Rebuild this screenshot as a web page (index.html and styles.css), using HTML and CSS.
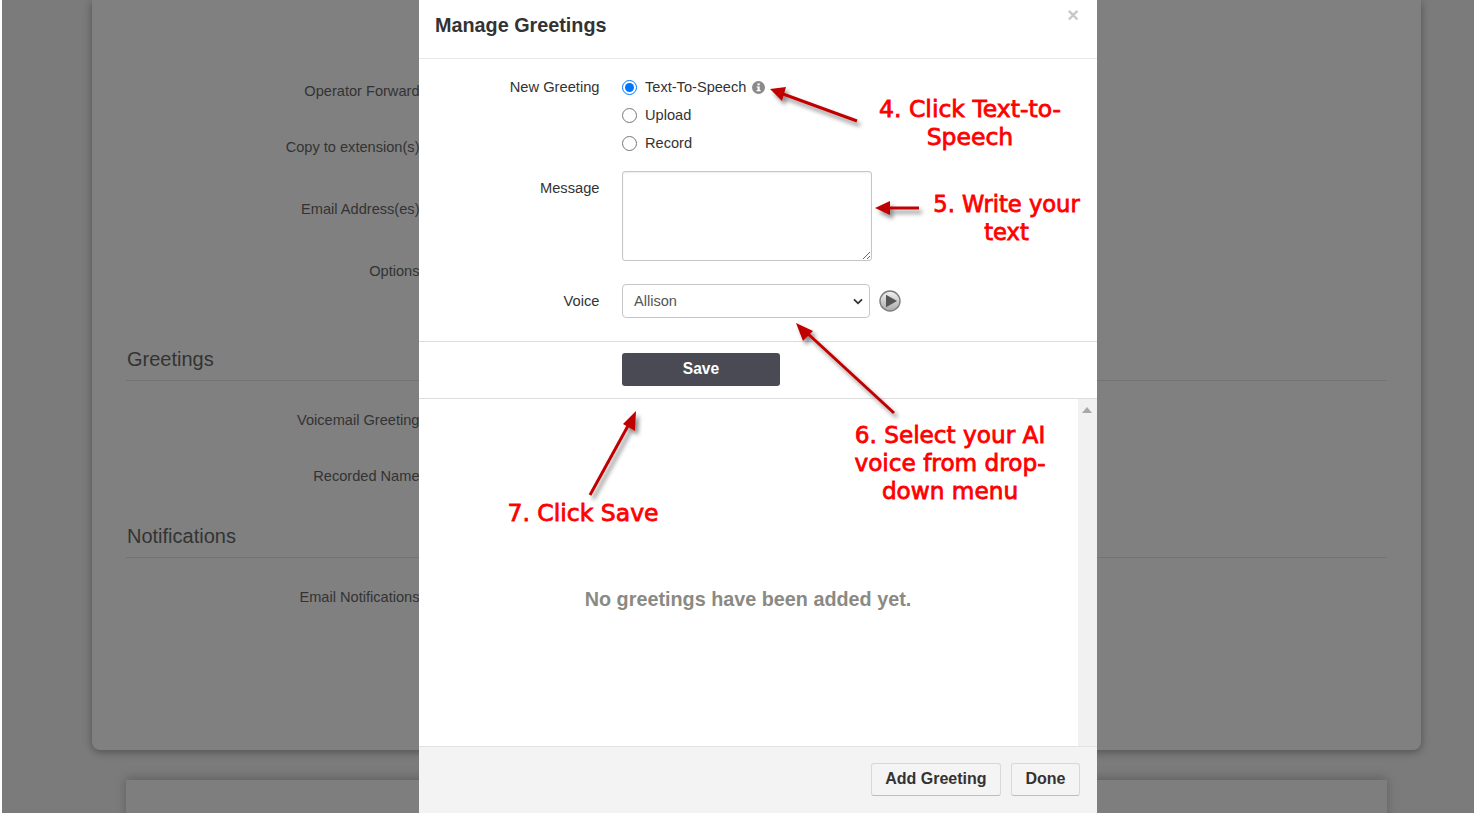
FILE: index.html
```html
<!DOCTYPE html>
<html lang="en">
<head>
<meta charset="utf-8">
<title>Manage Greetings</title>
<link rel="stylesheet" href="styles.css">
</head>
<body>
<div class="page">
  <section class="card main-card">
    <div class="row r-op"><span class="bg-label">Operator Forward</span></div>
    <div class="row r-copy"><span class="bg-label">Copy to extension(s)</span></div>
    <div class="row r-email"><span class="bg-label">Email Address(es)</span></div>
    <div class="row r-opt"><span class="bg-label">Options</span></div>
    <h2 class="bg-heading h-greet">Greetings</h2>
    <div class="row r-vm"><span class="bg-label">Voicemail Greeting</span></div>
    <div class="row r-name"><span class="bg-label">Recorded Name</span></div>
    <h2 class="bg-heading h-notif">Notifications</h2>
    <div class="row r-notif"><span class="bg-label">Email Notifications</span></div>
  </section>
  <section class="card next-card"></section>
</div>

<div class="modal">
  <header class="modal-head">
    <h1 class="modal-title">Manage Greetings</h1>
    <span class="close">×</span>
  </header>
  <form class="modal-form">
    <div class="form-row radios-row">
      <div class="form-label">New Greeting</div>
      <div class="radios">
        <label class="radio"><input type="radio" name="g" checked>Text-To-Speech
          <svg class="info" width="13" height="13" viewBox="0 0 13 13"><circle cx="6.5" cy="6.5" r="6.5" fill="#8a8a8a"/><rect x="5.5" y="2.4" width="2.2" height="2" fill="#fff"/><path d="M4.600 5.400h3.100v3.700h1v1.200H4.600V9.100h1V6.600h-1z" fill="#fff"/></svg>
        </label>
        <label class="radio"><input type="radio" name="g">Upload</label>
        <label class="radio"><input type="radio" name="g">Record</label>
      </div>
    </div>
    <div class="form-row message-row">
      <div class="form-label">Message</div>
      <textarea class="message"></textarea>
    </div>
    <div class="form-row voice-row">
      <div class="form-label">Voice</div>
      <div class="select">Allison
        <svg class="chev" width="10" height="7" viewBox="0 0 10 7"><path d="M1 1.300l4 4 4-4" fill="none" stroke="#333" stroke-width="1.800"/></svg>
      </div>
      <svg class="play" width="22" height="22" viewBox="0 0 22 22">
        <defs><linearGradient id="pg" x1="0" y1="0" x2="0" y2="1"><stop offset="0" stop-color="#f2f2f2"/><stop offset="1" stop-color="#a9a9a9"/></linearGradient></defs>
        <circle cx="11" cy="11" r="10" fill="url(#pg)" stroke="#7c7c7c" stroke-width="1.400"/>
        <path d="M7 4.800L18 11 7 17.200z" fill="#555"/>
      </svg>
    </div>
  </form>
  <div class="save-bar"><button type="button" class="save">Save</button></div>
  <div class="list">
    <div class="list-body"><p class="empty">No greetings have been added yet.</p></div>
    <div class="scrollbar"><span class="scroll-up"></span></div>
  </div>
  <footer class="modal-foot">
    <button type="button" class="btn">Add Greeting</button>
    <button type="button" class="btn">Done</button>
  </footer>
</div>

<svg class="arrows" width="1474" height="813" viewBox="0 0 1474 813">
  <defs>
    <filter id="sh" x="-30%" y="-30%" width="160%" height="160%">
      <feDropShadow dx="3" dy="4" stdDeviation="2.200" flood-color="#000" flood-opacity=".45"/>
    </filter>
  </defs>
  <g filter="url(#sh)">
    <g fill="none" stroke="#c00000" stroke-width="3">
      <path d="M857 121L783 94"/>
      <path d="M919 208H888"/>
      <path d="M894 413L806 332"/>
      <path d="M590 495L629 424"/>
    </g>
    <g fill="#c00000">
      <path d="M770 89l16-2-4 14z"/>
      <path d="M875 208l15-7v14z"/>
      <path d="M796 323l17 8-10 10z"/>
      <path d="M636 411l-1 20-12-7z"/>
    </g>
  </g>
</svg>

<div class="note n4">4. Click Text-to-<br>Speech</div>
<div class="note n5">5. Write your<br>text</div>
<div class="note n6">6. Select your AI<br>voice from drop-<br>down menu</div>
<div class="note n7">7. Click Save</div>
</body>
</html>
```
FILE: styles.css
```css
* { box-sizing: border-box; }
html, body { margin: 0; height: 813px; overflow: hidden; }
body {
  background: #fff;
  font-family: "Liberation Sans", Arial, sans-serif;
  position: relative;
}
.page {
  margin-left: 2px;
  height: 813px;
  background: #7b7b7b;
  padding: 0 53px 0 90px;
  overflow: hidden;
}
.card { background: #808080; }
.main-card {
  height: 750px;
  border-radius: 0 0 8px 8px;
  box-shadow: 0 2px 8px rgba(0,0,0,.35);
  padding: 0 34px;
  position: relative;
}
.next-card {
  height: 60px;
  margin: 30px 34px 0;
  background: #7e7e7e;
  box-shadow: 0 -2px 10px rgba(0,0,0,.22);
}
.row { display: flex; justify-content: flex-end; width: 293.5px; }
.bg-label { font-size: 14.6px; line-height: 18px; color: #333; white-space: nowrap; }
.r-op { padding-top: 82px; }
.r-copy { padding-top: 38px; }
.r-email { padding-top: 44px; }
.r-opt { padding-top: 44px; }
.r-vm { padding-top: 30px; }
.r-name { padding-top: 38px; }
.r-notif { padding-top: 30px; }
.bg-heading {
  margin: 0;
  font-size: 20px;
  font-weight: 400;
  line-height: 24px;
  color: #333;
  height: 34px;
  padding-left: 1px;
  border-bottom: 1px solid #737373;
}
.h-greet { margin-top: 67px; }
.h-notif { margin-top: 39px; }

.modal {
  position: absolute;
  left: 419px;
  top: 0;
  width: 678px;
  height: 813px;
  background: #fff;
  display: flex;
  flex-direction: column;
  border-radius: 0 0 6px 6px;
}
.modal-head {
  height: 59px;
  flex: none;
  padding: 13px 16px 0;
  border-bottom: 1px solid #e9e9e9;
  display: flex;
  justify-content: space-between;
}
.modal-title { margin: 0; font-size: 19.8px; line-height: 24px; font-weight: 700; color: #333; }
.close { font-size: 20px; font-weight: 700; line-height: 1; color: #c8c8c8; margin-top: -8px; margin-right: 2px; }
.modal-form { height: 283px; flex: none; border-bottom: 1px solid #ddd; padding-top: 14px; }
.form-row { display: flex; }
.form-label {
  width: 180.5px;
  text-align: right;
  font-size: 14.7px;
  line-height: 28px;
  color: #333;
  margin-right: 22.5px;
  flex: none;
}
.radio {
  display: flex;
  align-items: center;
  height: 28px;
  font-size: 14.6px;
  color: #333;
}
.radio input { margin: 0 8px 0 0; width: 15px; height: 15px; accent-color: #0075ff; }
.info { margin-left: 6px; }
.message-row { margin-top: 14px; }
.message-row .form-label { line-height: 18px; padding-top: 8px; }
.message {
  width: 250px;
  height: 90px;
  border: 1px solid #c6c6c6;
  border-radius: 3px;
  background: #fff;
  box-shadow: inset 0 1px 2px rgba(0,0,0,.08);
  display: block;
  margin: 0;
}
.voice-row { margin-top: 23px; align-items: center; }
.voice-row .form-label { line-height: 34px; }
.select {
  width: 248px;
  height: 34px;
  border: 1px solid #c6c6c6;
  border-radius: 4px;
  padding: 0 6px 0 11px;
  font-size: 14.6px;
  line-height: 32px;
  color: #555;
  display: flex;
  justify-content: space-between;
  align-items: center;
}
.play { margin-left: 9px; }
.save-bar { height: 57px; flex: none; border-bottom: 1px solid #ddd; padding: 11px 0 0 203px; }
.save {
  display: block;
  width: 158px;
  height: 33px;
  border: 0;
  border-radius: 3px;
  background: #4a4a54;
  color: #fff;
  padding: 0 0 2px;
  font: 700 15.6px "Liberation Sans", Arial, sans-serif;
}
.list { flex: 1; display: flex; min-height: 0; }
.list-body { flex: 1; }
.empty {
  margin: 188px 0 0;
  padding-right: 1px;
  text-align: center;
  font-size: 19.8px;
  line-height: 24px;
  font-weight: 700;
  color: #8a8a84;
}
.scrollbar { width: 19px; background: #f1f1f1; padding: 8px 0 0 4px; }
.scroll-up {
  display: block;
  width: 0;
  height: 0;
  border-left: 5px solid transparent;
  border-right: 5px solid transparent;
  border-bottom: 6px solid #a8a8a8;
}
.modal-foot {
  height: 67px;
  flex: none;
  background: #f3f3f3;
  border-top: 1px solid #e3e3e3;
  display: flex;
  justify-content: flex-end;
  align-items: flex-start;
  gap: 10px;
  padding: 16px 17px 0 0;
}
.btn {
  height: 33px;
  padding: 0 13.5px 2px;
  background: #f4f4f4;
  border: 1px solid #d8d8d8;
  border-bottom-color: #bdbdbd;
  border-radius: 3px;
  color: #333;
  font: 700 16px "Liberation Sans", Arial, sans-serif;
}
.arrows { position: absolute; left: 0; top: 0; pointer-events: none; }
.note {
  position: absolute;
  text-align: center;
  color: #f00;
  font-family: "DejaVu Sans", Verdana, sans-serif;
  font-size: 23.5px;
  line-height: 28px;
  -webkit-text-stroke: .8px #f00;
  white-space: nowrap;
}
.n4 { left: 970px; top: 95px; transform: translateX(-50%); }
.n5 { left: 1006.5px; top: 190px; font-size: 22.6px; transform: translateX(-50%); }
.n6 { left: 950px; top: 421px; font-size: 23.2px; transform: translateX(-50%); }
.n7 { left: 583px; top: 499px; transform: translateX(-50%); }
```
